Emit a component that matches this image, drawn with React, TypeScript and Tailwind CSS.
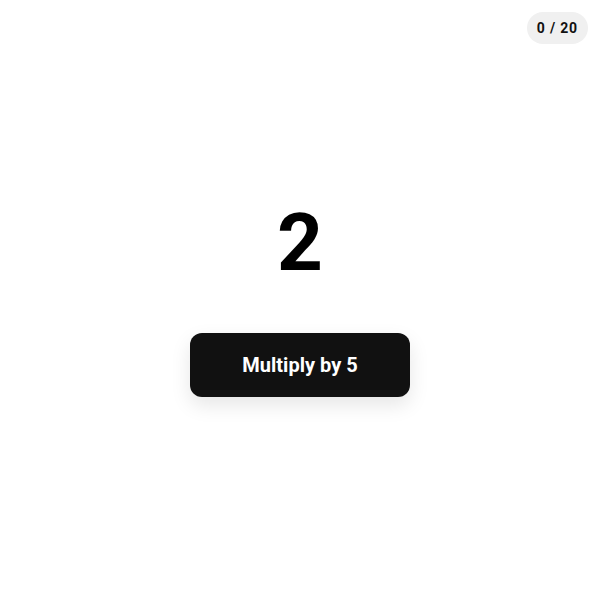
import React, { useState } from 'react';

const App: React.FC = () => {
  const [value, setValue] = useState(2);
  const [steps, setSteps] = useState(0);
  const total = 20;

  const handleClick = () => {
    if (steps >= total) return;
    setValue((v) => v * 5);
    setSteps((s) => s + 1);
  };

  return (
    <div className="relative flex h-screen w-full flex-col items-center justify-center bg-white font-['Roboto',sans-serif]">
      <div className="absolute right-3 top-3 flex h-8 items-center rounded-full bg-[#f0f0f0] px-[10px] text-[14px] font-bold tracking-[0.06em] text-[#111]">
        {steps}&nbsp;/&nbsp;{total}
      </div>
      <div className="text-[80px] font-bold leading-none text-black">{value}</div>
      <button
        onClick={handleClick}
        className="mt-[50px] h-16 w-[220px] rounded-xl bg-[#111111] text-[20px] font-bold text-white shadow-[0_8px_20px_rgba(0,0,0,0.1)]"
      >
        Multiply by 5
      </button>
    </div>
  );
};

export default App;
